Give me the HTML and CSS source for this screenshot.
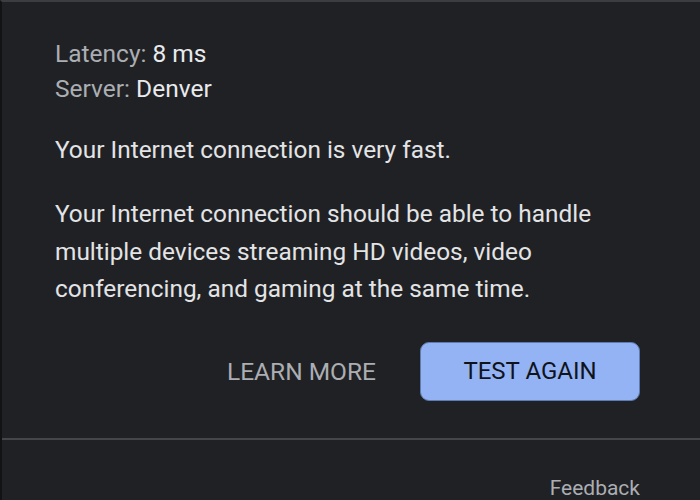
FILE: index.html
```html
<!DOCTYPE html>
<html>
<head>
<meta charset="utf-8">
<link rel="stylesheet" href="styles.css">
</head>
<body>
<div class="frame">
  <div class="panel">
    <div class="stats">
      <div class="stat"><span class="label">Latency:</span> <span class="value">8 ms</span></div>
      <div class="stat"><span class="label">Server:</span> <span class="value">Denver</span></div>
    </div>
    <p class="headline">Your Internet connection is very fast.</p>
    <p class="desc">Your Internet connection should be able to handle multiple devices streaming HD videos, video conferencing, and gaming at the same time.</p>
    <div class="actions">
      <button class="btn-text">LEARN MORE</button>
      <button class="btn-primary">TEST AGAIN</button>
    </div>
  </div>
  <div class="footer">
    <span class="feedback">Feedback</span>
  </div>
</div>
</body>
</html>
```
FILE: styles.css
```css
html, body {
  margin: 0;
  padding: 0;
  background: #202124;
}
body {
  width: 700px;
  height: 500px;
  overflow: hidden;
  font-family: Roboto, "Liberation Sans", sans-serif;
}
.frame {
  height: 498px;
  border-top: 2px solid #3c3d40;
  border-left: 2px solid #121315;
  background: #202124;
  display: flex;
  flex-direction: column;
}
.panel {
  padding: 34px 60px 0 53px;
}
.stats {
  font-size: 24.5px;
  line-height: 35px;
}
.label { color: #abaeb3; }
.value { color: #e8eaed; }
.headline {
  margin: 25px 0 0;
  font-size: 24.4px;
  line-height: 38px;
  color: #e3e4e6;
}
.desc {
  margin: 26px 0 0;
  font-size: 24.4px;
  line-height: 37.5px;
  color: #e3e4e6;
  width: 570px;
}
.actions {
  display: flex;
  justify-content: flex-end;
  align-items: center;
  gap: 44px;
  margin-top: 34px;
}
.btn-text {
  background: none;
  border: none;
  padding: 0;
  font-family: inherit;
  font-size: 24.5px;
  color: #abaeb3;
}
.btn-primary {
  width: 220px;
  height: 59px;
  border-radius: 9px;
  border: 1px solid #5f7cb0;
  background: #93b3f4;
  color: #10131c;
  font-family: inherit;
  font-size: 24px;
}
.footer {
  margin-top: 37px;
  border-top: 2px solid #45464a;
  display: flex;
  justify-content: flex-end;
  padding: 36px 60px 0 0;
}
.feedback {
  font-size: 21px;
  color: #abaeb3;
  line-height: 24px;
}
```
